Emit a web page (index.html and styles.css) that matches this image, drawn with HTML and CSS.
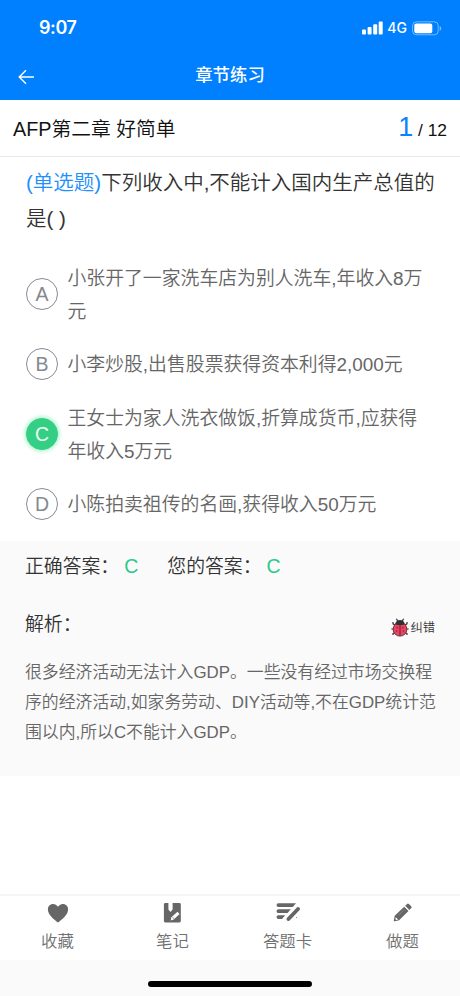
FILE: index.html
```html
<!DOCTYPE html>
<html lang="zh-CN">
<head>
<meta charset="utf-8">
<title>章节练习</title>
<link rel="stylesheet" href="styles.css">
</head>
<body>
<div class="app">
  <header class="top">
    <div class="status">
      <span class="time">9:07</span>
      <span class="signals">
        <svg class="bars" width="21" height="14" viewBox="0 0 21 14" fill="#fff"><rect x="0" y="8.4" width="4" height="5.1" rx="1"/><rect x="5.6" y="6" width="4" height="7.5" rx="1"/><rect x="11.2" y="3.2" width="4" height="10.3" rx="1"/><rect x="16.7" y="0.4" width="4" height="13.1" rx="1"/></svg>
        <span class="net">4G</span>
        <svg class="battery" width="30" height="15" viewBox="0 0 30 15"><rect x=".6" y=".8" width="25.6" height="13" rx="3.8" fill="none" stroke="#fff" stroke-opacity=".45"/><rect x="2.3" y="2.5" width="18" height="9.7" rx="2" fill="#fff"/><path d="M27.7 5v4.8c2-.8 2-4 0-4.8z" fill="#fff" fill-opacity=".5"/></svg>
      </span>
    </div>
    <nav class="nav">
      <svg class="back" width="17" height="16" viewBox="0 0 17 16" fill="none" stroke="#fff" stroke-width="1.4"><path d="M8 1.2L1.2 8L8 14.8M1.2 8H16"/></svg>
      <h1>章节练习</h1>
      <span class="spacer"></span>
    </nav>
  </header>

  <section class="chapter">
    <h2>AFP第二章 好简单</h2>
    <p class="count"><b>1</b> / 12</p>
  </section>

  <main class="quiz">
    <p class="question"><span>(单选题)</span>下列收入中,不能计入国内生产总值的<br>是( )</p>
    <ul class="options">
      <li><i>A</i><p>小张开了一家洗车店为别人洗车,年收入8万<br>元</p></li>
      <li><i>B</i><p>小李炒股,出售股票获得资本利得2,000元</p></li>
      <li><i class="chosen">C</i><p>王女士为家人洗衣做饭,折算成货币,应获得<br>年收入5万元</p></li>
      <li><i>D</i><p>小陈拍卖祖传的名画,获得收入50万元</p></li>
    </ul>
  </main>

  <section class="result">
    <div class="answers">
      <span class="label">正确答案：</span><span class="letter">C</span>
      <span class="label">您的答案：</span><span class="letter">C</span>
    </div>
    <div class="analysis-head">
      <h3>解析：</h3>
      <a class="report">
        <svg width="18" height="19" viewBox="0 0 18 19"><g fill="none" stroke="#333038" stroke-width="1.2"><path d="M6.7 3L5.4.8M11.3 3L12.6.8M4 7L2 5.8V4M14 7l2-1.2V4M3 11H.3M15 11h2.7M4 14.5l-2 1V17M14 14.5l2 1V17"/></g><circle cx="9" cy="11.200" r="6.900" fill="#ee4260" stroke="#493039" stroke-width=".9"/><path d="M4.200 6.300C4.600 3.500 6.500 2 9 2s4.400 1.500 4.800 4.300C11 7.500 7 7.500 4.200 6.300z" fill="#302f38"/><path d="M9 6.500v11" stroke="#5c2636"/><g fill="#8c2b42"><circle cx="6.200" cy="9.600" r=".9"/><circle cx="11.800" cy="9.600" r=".9"/><circle cx="5.600" cy="13" r=".8"/><circle cx="12.400" cy="13" r=".8"/></g></svg>
        <span>纠错</span>
      </a>
    </div>
    <p class="analysis">很多经济活动无法计入GDP。一些没有经过市场交换程<br>序的经济活动,如家务劳动、DIY活动等,不在GDP统计范<br>围以内,所以C不能计入GDP。</p>
  </section>

  <footer class="tabs">
    <a><svg width="22" height="22" viewBox="0 0 22 22" fill="#666"><path d="M11 20.600C7.500 17.500.9 13 .9 7.400.9 4.200 3.100 1.900 6 1.900c2 0 3.900 1.100 5 2.900 1.100-1.800 3-2.900 5-2.900 2.900 0 5.100 2.300 5.100 5.500C21.100 13 14.500 17.500 11 20.600z"/></svg><span>收藏</span></a>
    <a><svg width="22" height="22" viewBox="0 0 22 22"><path d="M3.300 1H6.400V7.600L8.500 9.900 10.600 7.600V1H17.400Q18.800 1 18.800 2.400V19Q18.800 20.400 17.400 20.400H3.300Q1.900 20.400 1.900 19V2.400Q1.900 1 3.300 1z" fill="#666"/><path d="M8.700 18.400l.7-3.100 6-5.500 2.200 2.300-5.900 5.500z" fill="#fff"/><path d="M10.200 14.900l2 2" stroke="#666" stroke-width=".7"/></svg><span>笔记</span></a>
    <a><svg width="24" height="22" viewBox="0 0 24 22"><g fill="#666"><path d="M2.400 1.200H20L16.700 4.900H2.400a1.850 1.850 0 0 1 0-3.700zM2.400 7.300H14.800L11.500 11H2.400a1.850 1.850 0 0 1 0-3.700zM2.400 13.200H9.200L6 16.900H2.400a1.850 1.850 0 0 1 0-3.700z"/></g><path d="M12.500 17L22 7" stroke="#666" stroke-width="3.800" stroke-linecap="round"/><path d="M20.300 15.800l.3-.3" stroke="#777" stroke-linecap="round"/></svg><span>答题卡</span></a>
    <a><svg width="22" height="22" viewBox="0 0 22 22"><path d="M12.200 4.800l4.300 4.300L7.100 18.300 2.600 19.300Q1.600 19.400 1.800 18.400L2.700 13.800zM13.200 3.800l1.900-1.900q.9-.7 1.800.1l2.300 2.300q.9.900.1 1.800l-1.900 1.900z" fill="#666"/><path d="M3.800 15.200l2.400 2.400-2 .4-.8-.8z" fill="#fff"/><path d="M6.500 13.400l6-6" stroke="#999" stroke-width=".6"/></svg><span>做题</span></a>
  </footer>
  <div class="home"><span></span></div>
</div>
</body>
</html>
```
FILE: styles.css
```css
* { box-sizing: border-box; margin: 0; padding: 0; }
body {
  width: 460px;
  font-family: "Liberation Sans", "Noto Sans CJK SC", sans-serif;
  font-weight: 350;
  background: #fff;
  color: #333;
}
.app { height: 996px; display: flex; flex-direction: column; white-space: nowrap; overflow: hidden; }
.top { height: 100px; flex: none; background: #0080ff; color: #fff; }
.status { height: 56px; display: flex; justify-content: space-between; align-items: center; padding: 0 18px 0 39px; }
.time { font: 600 18px/20px Inter, sans-serif; letter-spacing: -.4px; }
.signals { display: flex; align-items: center; }
.net { font: 500 14px/16px Inter, sans-serif; margin: 0 5px 0 4px; }
.nav { height: 38px; display: flex; align-items: center; justify-content: space-between; padding: 0 18px; }
.back { position: relative; top: 2px; }
.nav h1 { font-size: 17.4px; font-weight: 500; line-height: 26px; }
.spacer { width: 17px; }

.chapter { height: 57px; flex: none; display: flex; align-items: center; justify-content: space-between; padding: 0 13px; border-bottom: 1px solid #e8e8e8; color: #111; }
.chapter h2 { font-size: 19.8px; font-weight: inherit; line-height: 28px; margin-top: 2px; }
.count { font-size: 17.4px; line-height: 30px; }
.count b { font-size: 27px; font-weight: inherit; color: #0d83fb; }

.quiz { height: 384px; flex: none; padding: 8px 25px 0 26px; }
.question { font-size: 20.5px; line-height: 36px; }
.question span { color: #2090fa; }
.options { list-style: none; margin-top: 22.500px; display: grid; gap: 18.600px; }
.options li { display: flex; align-items: center; gap: 9.500px; color: #666; }
.options p { font-size: 18.850px; line-height: 33px; padding: 2px 0 0; }
.options i { flex: none; width: 32px; height: 32px; border: 1px solid #888b96; border-radius: 50%; display: flex; align-items: center; justify-content: center; font-style: normal; font-size: 19.500px; line-height: 30px; color: #85888f; }
.options .chosen { border-color: #35ce85; background: #35ce85; color: #e8fff2; box-shadow: 0 0 4px 1px #9cf0c4; }

.result { height: 235px; flex: none; background: #fafafa; padding: 11px 25px 0; }
.answers { display: flex; align-items: baseline; height: 32px; font-size: 18.850px; line-height: 29px; }
.letter { color: #2cc98a; margin: 0 29px 0 5px; font-size: 19.500px; }
.analysis-head { display: flex; justify-content: space-between; align-items: center; height: 32px; margin-top: 22px; }
.analysis-head h3 { font-size: 18.850px; font-weight: inherit; }
.report { display: flex; align-items: center; gap: 1px; font-size: 12.300px; margin-top: 10px; }
.analysis { margin-top: 20px; font-size: 16.850px; line-height: 30px; color: #666; }

.tabs { height: 66px; flex: none; margin-top: 118px; display: flex; border-top: 2px solid #f5f5f5; }
.tabs a { flex: 1; display: flex; flex-direction: column; align-items: center; padding-top: 6px; color: #707070; }
.tabs span { font-size: 16.400px; line-height: 24px; margin-top: 5px; }
.home { flex: 1; background: #fafafa; display: flex; justify-content: center; align-items: flex-start; padding-top: 21px; }
.home span { width: 164px; height: 6px; border-radius: 3px; background: #000; }
```
